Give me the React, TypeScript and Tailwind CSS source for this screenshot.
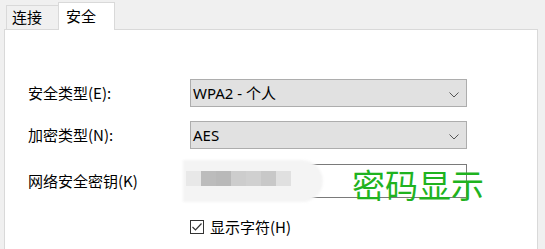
import React from 'react';

const font = { fontFamily: '"Noto Sans CJK SC", "Microsoft YaHei", sans-serif' };
const wideFont = { fontFamily: '"Noto Sans", "Noto Sans CJK SC", sans-serif' };

const Chevron: React.FC = () => (
    <svg width="10" height="6" viewBox="0 0 10 6" className="absolute right-[7px] top-[12px]">
        <path d="M0.5 0.5 L5 5 L9.5 0.5" fill="none" stroke="#555" strokeWidth="1" />
    </svg>
);

const Select: React.FC<{ value: string }> = ({ value }) => (
    <div className="relative h-[28px] w-[277px] border border-[#adadad] bg-[#e1e1e1] pl-[2px] text-[15px] leading-[26px] text-black" style={wideFont}>
        {value}
        <Chevron />
    </div>
);

const squares = ['#e8e8e8', '#bcbcbc', '#b9b9b9', '#cdcdcd', '#d0d0d0', '#c8c8c8', '#e0e0e0'];

const App: React.FC = () => {
    return (
        <div className="h-[249px] w-[545px] overflow-hidden bg-[#f0f0f0] pl-[4px] text-black" style={font}>
            <div className="flex h-[29px] items-end pl-[2px] text-[15px]">
                <div className="h-[24px] w-[52px] border border-b-0 border-r-0 border-[#d9d9d9] pl-[5px] leading-[22px]">连接</div>
                <div className="relative z-10 -mb-px h-[28px] w-[57px] border border-b-0 border-[#d9d9d9] bg-white pl-[7px] leading-[26px]">安全</div>
            </div>
            <div className="h-[240px] w-[534px] border border-[#d9d9d9] bg-white pl-[23px] pt-[49px] text-[15px]">
                <div className="grid grid-cols-[162px_277px] items-center">
                    <div>安全类型(E):</div>
                    <Select value="WPA2 - 个人" />
                    <div className="mt-[14px]">加密类型(N):</div>
                    <div className="mt-[14px]"><Select value="AES" /></div>
                    <div className="mt-[15px]">网络安全密钥(K)</div>
                    <div className="relative mt-[15px] h-[34px] w-[277px] border border-[#7a7a7a] bg-white">
                        <div className="absolute -left-[8px] -top-[5px] h-[42px] w-[140px] rounded-r-[22px] bg-[#f4f4f4] blur-[1px]" />
                        <div className="absolute -left-[5px] top-[6px] flex h-[15px]">
                            {squares.map((c, i) => (
                                <div key={i} className="h-full w-[15px]" style={{ backgroundColor: c }} />
                            ))}
                        </div>
                        <div className="absolute left-[161px] top-[3px] whitespace-nowrap text-[33px] leading-none text-[#1fb31f]">密码显示</div>
                    </div>
                    <div />
                    <div className="mt-[18px] flex items-center">
                        <div className="flex h-[14px] w-[14px] items-center justify-center border border-[#333]">
                            <svg width="10" height="8" viewBox="0 0 10 8">
                                <path d="M0.5 4 L3.5 7 L9.5 0.5" fill="none" stroke="#333" strokeWidth="1.2" />
                            </svg>
                        </div>
                        <span className="ml-[6px]">显示字符(H)</span>
                    </div>
                </div>
            </div>
        </div>
    );
};

export default App;
